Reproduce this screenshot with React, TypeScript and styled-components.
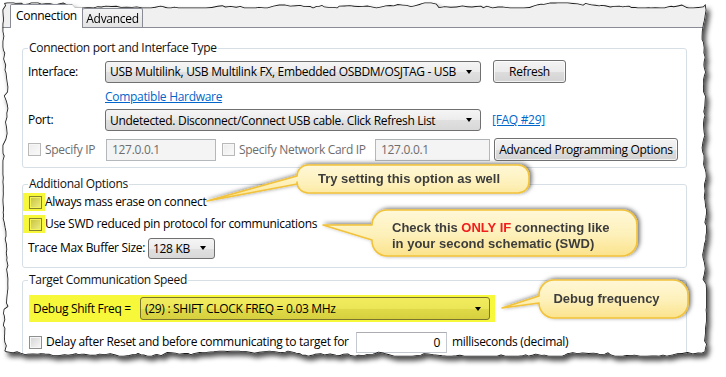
import React from "react";
import styled, { createGlobalStyle } from "styled-components";

const GlobalStyle = createGlobalStyle`
  html, body { margin: 0; padding: 0; background: #fff; }
  body { font-family: "Open Sans", "Noto Sans", sans-serif; }
`;

/* ---------- torn paper frame ---------- */
function rng(seed: number) {
  let a = seed;
  return () => {
    a |= 0;
    a = (a + 0x6d2b79f5) | 0;
    let t = Math.imul(a ^ (a >>> 15), 1 | a);
    t = (t + Math.imul(t ^ (t >>> 7), 61 | t)) ^ t;
    return ((t ^ (t >>> 14)) >>> 0) / 4294967296;
  };
}

const FW = 708;
const FH = 356;

function tornPoints(): [number, number][] {
  const r = rng(29);
  const pts: [number, number][] = [];
  let prev = 2;
  const j = () => {
    let v = prev + (r() - 0.5) * 3.2;
    if (r() < 0.15) v += (r() - 0.3) * 4;
    v = Math.max(0.5, Math.min(5.5, v));
    prev = v;
    return v;
  };
  for (let x = 2; x < FW - 6; x += 2 + r() * 4) pts.push([x, j()]);
  for (let y = 2; y < FH - 6; y += 2 + r() * 4) pts.push([FW - 8 + j() * 0.9, y]);
  for (let x = FW - 8; x > 2; x -= 2 + r() * 4) pts.push([x, FH - 7 + j()]);
  for (let y = FH - 7; y > 2; y -= 2 + r() * 4) pts.push([j(), y]);
  return pts;
}

const TORN = tornPoints();
const CLIP = `polygon(${TORN.map(([x, y]) => `${x.toFixed(1)}px ${y.toFixed(1)}px`).join(", ")})`;
const OUTLINE = `M${TORN.map(([x, y]) => `${x.toFixed(1)},${y.toFixed(1)}`).join(" L")} Z`;

const Page = styled.div`
  position: relative;
  width: 726px;
  height: 377px;
  box-sizing: border-box;
  padding: 2px;
  overflow: hidden;
  background: #fff;
`;

const ShadowWrap = styled.div`
  width: ${FW}px;
  height: ${FH}px;
  filter: drop-shadow(3px 4px 2.5px rgba(0, 0, 0, 0.7));
`;

const Frame = styled.div`
  position: relative;
  width: 100%;
  height: 100%;
  background: #fff;
  display: flex;
  flex-direction: column;
  font-family: "Open Sans", "Noto Sans", sans-serif;
  font-size: 12px;
  letter-spacing: -0.3px;
  color: #000;
`;

const TornOutline = styled.svg`
  position: absolute;
  inset: 0;
  pointer-events: none;
`;

/* ---------- tabs ---------- */
const TabBar = styled.div`
  flex: none;
  box-sizing: border-box;
  height: 26px;
  padding-left: 8px;
  display: flex;
  align-items: flex-end;
  background: #f0f0f0;
  border-bottom: 1px solid #898c95;
`;

const Tab = styled.div<{ $active?: boolean; $w: number }>`
  box-sizing: border-box;
  width: ${(p) => p.$w}px;
  height: ${(p) => (p.$active ? 24 : 19)}px;
  margin-bottom: ${(p) => (p.$active ? -1 : 0)}px;
  display: flex;
  align-items: center;
  justify-content: center;
  padding-bottom: ${(p) => (p.$active ? 3 : 0)}px;
  border: 1px solid #898c95;
  border-bottom: none;
  border-left: ${(p) => (p.$active ? "1px solid #898c95" : "none")};
  border-radius: 2px 2px 0 0;
  background: ${(p) => (p.$active ? "#fff" : "linear-gradient(#f4f4f4, #e4e4e4)")};
  position: relative;
  z-index: 1;
`;

/* ---------- groups ---------- */
const Content = styled.div`
  flex: 1;
  min-height: 0;
  padding: 0 23px 0 20px;
  display: flex;
  flex-direction: column;
`;

const Group = styled.fieldset<{ $mt: number; $pb: number }>`
  flex: none;
  margin: ${(p) => p.$mt}px 0 0;
  padding: 0 6px ${(p) => p.$pb}px 5px;
  min-width: 0;
  border: 1px solid #d5dfe5;
  border-radius: 3px;
  display: flex;
  flex-direction: column;
`;

const Legend = styled.legend`
  padding: 0 1px;
  font-size: 12px;
  line-height: 16px;
  color: #111;
`;

const Row = styled.div<{ $mt: number; $h: number }>`
  display: flex;
  align-items: center;
  margin-top: ${(p) => p.$mt}px;
  height: ${(p) => p.$h}px;
  white-space: nowrap;
`;

const Label = styled.span<{ $w?: number; $muted?: boolean }>`
  flex: none;
  width: ${(p) => (p.$w ? `${p.$w}px` : "auto")};
  color: ${(p) => (p.$muted ? "#6d6d6d" : "#000")};
  line-height: 16px;
`;

const Select = styled.div<{ $w: number; $h: number; $tint?: boolean }>`
  box-sizing: border-box;
  flex: none;
  width: ${(p) => p.$w}px;
  height: ${(p) => p.$h}px;
  display: flex;
  align-items: center;
  justify-content: space-between;
  padding: 0 8px 0 4px;
  border: 1px solid ${(p) => (p.$tint ? "#7a742c" : "#707070")};
  border-radius: 3px;
  background: ${(p) =>
    p.$tint
      ? "linear-gradient(#f0ec5e 0%, #ebe657 50%, #e0da48 51%, #d6cf3e 100%)"
      : "linear-gradient(#f5f5f5 0%, #ececec 50%, #e0e0e0 51%, #d8d8d8 100%)"};
  color: #000;
`;

const Caret = styled.span`
  flex: none;
  width: 0;
  height: 0;
  border-left: 3.5px solid transparent;
  border-right: 3.5px solid transparent;
  border-top: 4px solid #000;
`;

const Button = styled.div<{ $w: number; $ml: number }>`
  box-sizing: border-box;
  flex: none;
  width: ${(p) => p.$w}px;
  height: 23px;
  margin-left: ${(p) => p.$ml}px;
  display: flex;
  align-items: center;
  justify-content: center;
  border: 1px solid #707070;
  border-radius: 3px;
  background: linear-gradient(#f4f4f4 0%, #ebebeb 50%, #dddddd 51%, #d3d3d3 100%);
  box-shadow: inset 0 0 0 1px rgba(255, 255, 255, 0.7);
`;

const Link = styled.a<{ $ml?: number }>`
  margin-left: ${(p) => p.$ml ?? 0}px;
  color: #0066cc;
  text-decoration: underline;
  line-height: 16px;
  cursor: pointer;
`;

const TextBox = styled.div<{ $w: number; $h: number; $ml: number; $disabled?: boolean; $right?: boolean }>`
  box-sizing: border-box;
  flex: none;
  width: ${(p) => p.$w}px;
  height: ${(p) => p.$h}px;
  margin-left: ${(p) => p.$ml}px;
  display: flex;
  align-items: center;
  justify-content: ${(p) => (p.$right ? "flex-end" : "flex-start")};
  padding: 0 6px 0 5px;
  border: 1px solid ${(p) => (p.$disabled ? "#b5b8bb" : "#c4c8cf")};
  border-top-color: ${(p) => (p.$disabled ? "#adb2b5" : "#abadb3")};
  background: ${(p) => (p.$disabled ? "#f4f4f4" : "#fff")};
  color: ${(p) => (p.$disabled ? "#6d6d6d" : "#000")};
`;

const CheckBox = styled.span<{ $disabled?: boolean; $tint?: boolean; $ml?: number }>`
  box-sizing: border-box;
  flex: none;
  width: 13px;
  height: 13px;
  margin-left: ${(p) => p.$ml ?? 0}px;
  margin-right: 4px;
  border: 1px solid ${(p) => (p.$tint ? "#85832c" : p.$disabled ? "#b9b9b9" : "#8e8f8f")};
  background: ${(p) =>
    p.$tint
      ? "linear-gradient(135deg, #c5c23a, #efed86)"
      : p.$disabled
      ? "linear-gradient(135deg, #ececec, #fafafa)"
      : "linear-gradient(135deg, #d3d3d3, #f8f8f8)"};
  box-shadow: inset 0 0 0 1px ${(p) => (p.$tint ? "#f5f35a" : "#f6f6f6")};
`;

const MarkSquare = styled.span`
  flex: none;
  box-sizing: border-box;
  width: 22px;
  height: 18px;
  margin-left: -5px;
  padding-left: 6px;
  display: flex;
  align-items: center;
  background: #f8f83a;
`;

const MarkBar = styled.div`
  box-sizing: border-box;
  width: 466px;
  height: 27px;
  margin-top: 7px;
  margin-left: 1px;
  padding: 2px 5px 2px 4px;
  display: flex;
  align-items: center;
  background: #f8f83a;
  white-space: nowrap;
`;

/* ---------- callouts ---------- */
const CalloutBox = styled.div`
  position: absolute;
  pointer-events: none;
`;

const CalloutSvg = styled.svg`
  display: block;
  overflow: visible;
`;

const CalloutText = styled.div<{ $align: "center" | "left" }>`
  position: absolute;
  display: flex;
  flex-direction: column;
  justify-content: center;
  align-items: ${(p) => (p.$align === "center" ? "center" : "flex-start")};
  font-family: "Liberation Sans", Arial, sans-serif;
  font-weight: bold;
  font-size: 13px;
  line-height: 16px;
  color: #3d3d3d;
  white-space: nowrap;
`;

const Red = styled.span`
  color: #f21d1d;
`;

type Pt = [number, number];
interface CalloutProps {
  id: string;
  rect: [number, number, number, number];
  r: number;
  tip: Pt;
  a: Pt;
  b: Pt;
  align: "center" | "left";
  pad: [number, number, number, number];
  children: React.ReactNode;
}

function Callout({ id, rect, r, tip, a, b, align, pad, children }: CalloutProps) {
  const [x0, y0, x1, y1] = rect;
  const bx = Math.min(x0, tip[0]) - 8;
  const by = Math.min(y0, tip[1]) - 8;
  const bw = Math.max(x1, tip[0]) + 8 - bx;
  const bh = Math.max(y1, tip[1]) + 8 - by;
  const d = `M${x0 + r},${y0} H${x1 - r} A${r},${r} 0 0 1 ${x1},${y0 + r} V${y1 - r} A${r},${r} 0 0 1 ${x1 - r},${y1} H${x0 + r} A${r},${r} 0 0 1 ${x0},${y1 - r} L${b[0]},${b[1]} L${tip[0]},${tip[1]} L${a[0]},${a[1]} L${x0},${y0 + r} A${r},${r} 0 0 1 ${x0 + r},${y0} Z`;
  return (
    <CalloutBox style={{ left: bx, top: by, width: bw, height: bh }}>
      <CalloutSvg width={bw} height={bh} viewBox={`${bx} ${by} ${bw} ${bh}`}>
        <defs>
          <linearGradient id={`g-${id}`} x1="0" y1="0" x2="0" y2="1">
            <stop offset="0" stopColor="#fff8d8" />
            <stop offset="0.55" stopColor="#fdf0b8" />
            <stop offset="1" stopColor="#fbe38c" />
          </linearGradient>
          <filter id={`s-${id}`} x="-20%" y="-40%" width="140%" height="180%">
            <feDropShadow dx="2" dy="-1" stdDeviation="2" floodColor="#000" floodOpacity="0.55" />
          </filter>
        </defs>
        <path d={d} fill={`url(#g-${id})`} stroke="#f2c23a" strokeWidth="1.6" strokeLinejoin="round" filter={`url(#s-${id})`} />
      </CalloutSvg>
      <CalloutText
        $align={align}
        style={{
          left: x0 - bx,
          top: y0 - by,
          width: x1 - x0,
          height: y1 - y0,
          boxSizing: "border-box",
          padding: `${pad[0]}px ${pad[1]}px ${pad[2]}px ${pad[3]}px`,
        }}
      >
        {children}
      </CalloutText>
    </CalloutBox>
  );
}

export default function App() {
  return (
    <>
      <GlobalStyle />
      <Page>
        <ShadowWrap>
          <Frame style={{ clipPath: CLIP }}>
            <TabBar>
              <Tab $active $w={73}>Connection</Tab>
              <Tab $w={60}>Advanced</Tab>
            </TabBar>
            <Content>
              <Group $mt={12} $pb={6}>
                <Legend>Connection port and Interface Type</Legend>
                <Row $mt={4} $h={23}>
                  <Label $w={77}>Interface:</Label>
                  <Select $w={376} $h={22}>
                    <span>USB Multilink, USB Multilink FX, Embedded OSBDM/OSJTAG - USB</span>
                    <Caret />
                  </Select>
                  <Button $w={73} $ml={12}>Refresh</Button>
                </Row>
                <Row $mt={6} $h={16}>
                  <Link $ml={77}>Compatible Hardware</Link>
                </Row>
                <Row $mt={4} $h={22}>
                  <Label $w={77}>Port:</Label>
                  <Select $w={376} $h={22}>
                    <span>Undetected. Disconnect/Connect USB cable. Click Refresh List</span>
                    <Caret />
                  </Select>
                  <Link $ml={11}>[FAQ #29]</Link>
                </Row>
                <Row $mt={7} $h={23}>
                  <CheckBox $disabled />
                  <Label $w={61} $muted>Specify IP</Label>
                  <TextBox $w={110} $h={22} $ml={0} $disabled>127.0.0.1</TextBox>
                  <CheckBox $disabled $ml={6} />
                  <Label $w={136} $muted>Specify Network Card IP</Label>
                  <TextBox $w={115} $h={22} $ml={0} $disabled>127.0.0.1</TextBox>
                  <Button $w={184} $ml={4}>Advanced Programming Options</Button>
                </Row>
              </Group>

              <Group $mt={8} $pb={8}>
                <Legend>Additional Options</Legend>
                <Row $mt={1} $h={18}>
                  <MarkSquare>
                    <CheckBox $tint />
                  </MarkSquare>
                  <Label>Always mass erase on connect</Label>
                </Row>
                <Row $mt={4} $h={18}>
                  <MarkSquare>
                    <CheckBox $tint />
                  </MarkSquare>
                  <Label>Use SWD reduced pin protocol for communications</Label>
                </Row>
                <Row $mt={4} $h={22}>
                  <Label $w={120}>Trace Max Buffer Size:</Label>
                  <Select $w={67} $h={21}>
                    <span>128 KB</span>
                    <Caret />
                  </Select>
                </Row>
              </Group>

              <Group $mt={4} $pb={10}>
                <Legend>Target Communication Speed</Legend>
                <MarkBar>
                  <Label $w={107}>Debug Shift Freq =</Label>
                  <Select $w={350} $h={23} $tint>
                    <span>(29) : SHIFT CLOCK FREQ = 0.03 MHz</span>
                    <Caret />
                  </Select>
                </MarkBar>
                <Row $mt={9} $h={22}>
                  <CheckBox $ml={1} />
                  <Label $w={310}>Delay after Reset and before communicating to target for</Label>
                  <TextBox $w={91} $h={21} $ml={0} $right>0</TextBox>
                  <Label style={{ marginLeft: 5 }}>milliseconds (decimal)</Label>
                </Row>
              </Group>
            </Content>
            <TornOutline width={FW} height={FH}>
              <path d={OUTLINE} fill="none" stroke="#1c1c1c" strokeWidth="1.7" strokeLinejoin="round" />
            </TornOutline>
          </Frame>
        </ShadowWrap>

        <Callout
          id="c1"
          rect={[297, 165, 529, 193]}
          r={11}
          tip={[207, 201]}
          a={[297, 176]}
          b={[297, 184]}
          align="center"
          pad={[0, 8, 0, 0]}
        >
          <span>Try setting this option as well</span>
        </Callout>
        <Callout
          id="c2"
          rect={[372, 210, 637, 256]}
          r={15}
          tip={[323, 225]}
          a={[372, 225]}
          b={[372, 240]}
          align="left"
          pad={[6, 0, 0, 20]}
        >
          <span>
            Check this <Red>ONLY IF</Red> connecting like
          </span>
          <span>in your second schematic (SWD)</span>
        </Callout>
        <Callout
          id="c3"
          rect={[539, 280, 688, 318]}
          r={15}
          tip={[502, 308]}
          a={[539, 296]}
          b={[539, 303]}
          align="center"
          pad={[0, 14, 0, 0]}
        >
          <span>Debug frequency</span>
        </Callout>
      </Page>
    </>
  );
}
